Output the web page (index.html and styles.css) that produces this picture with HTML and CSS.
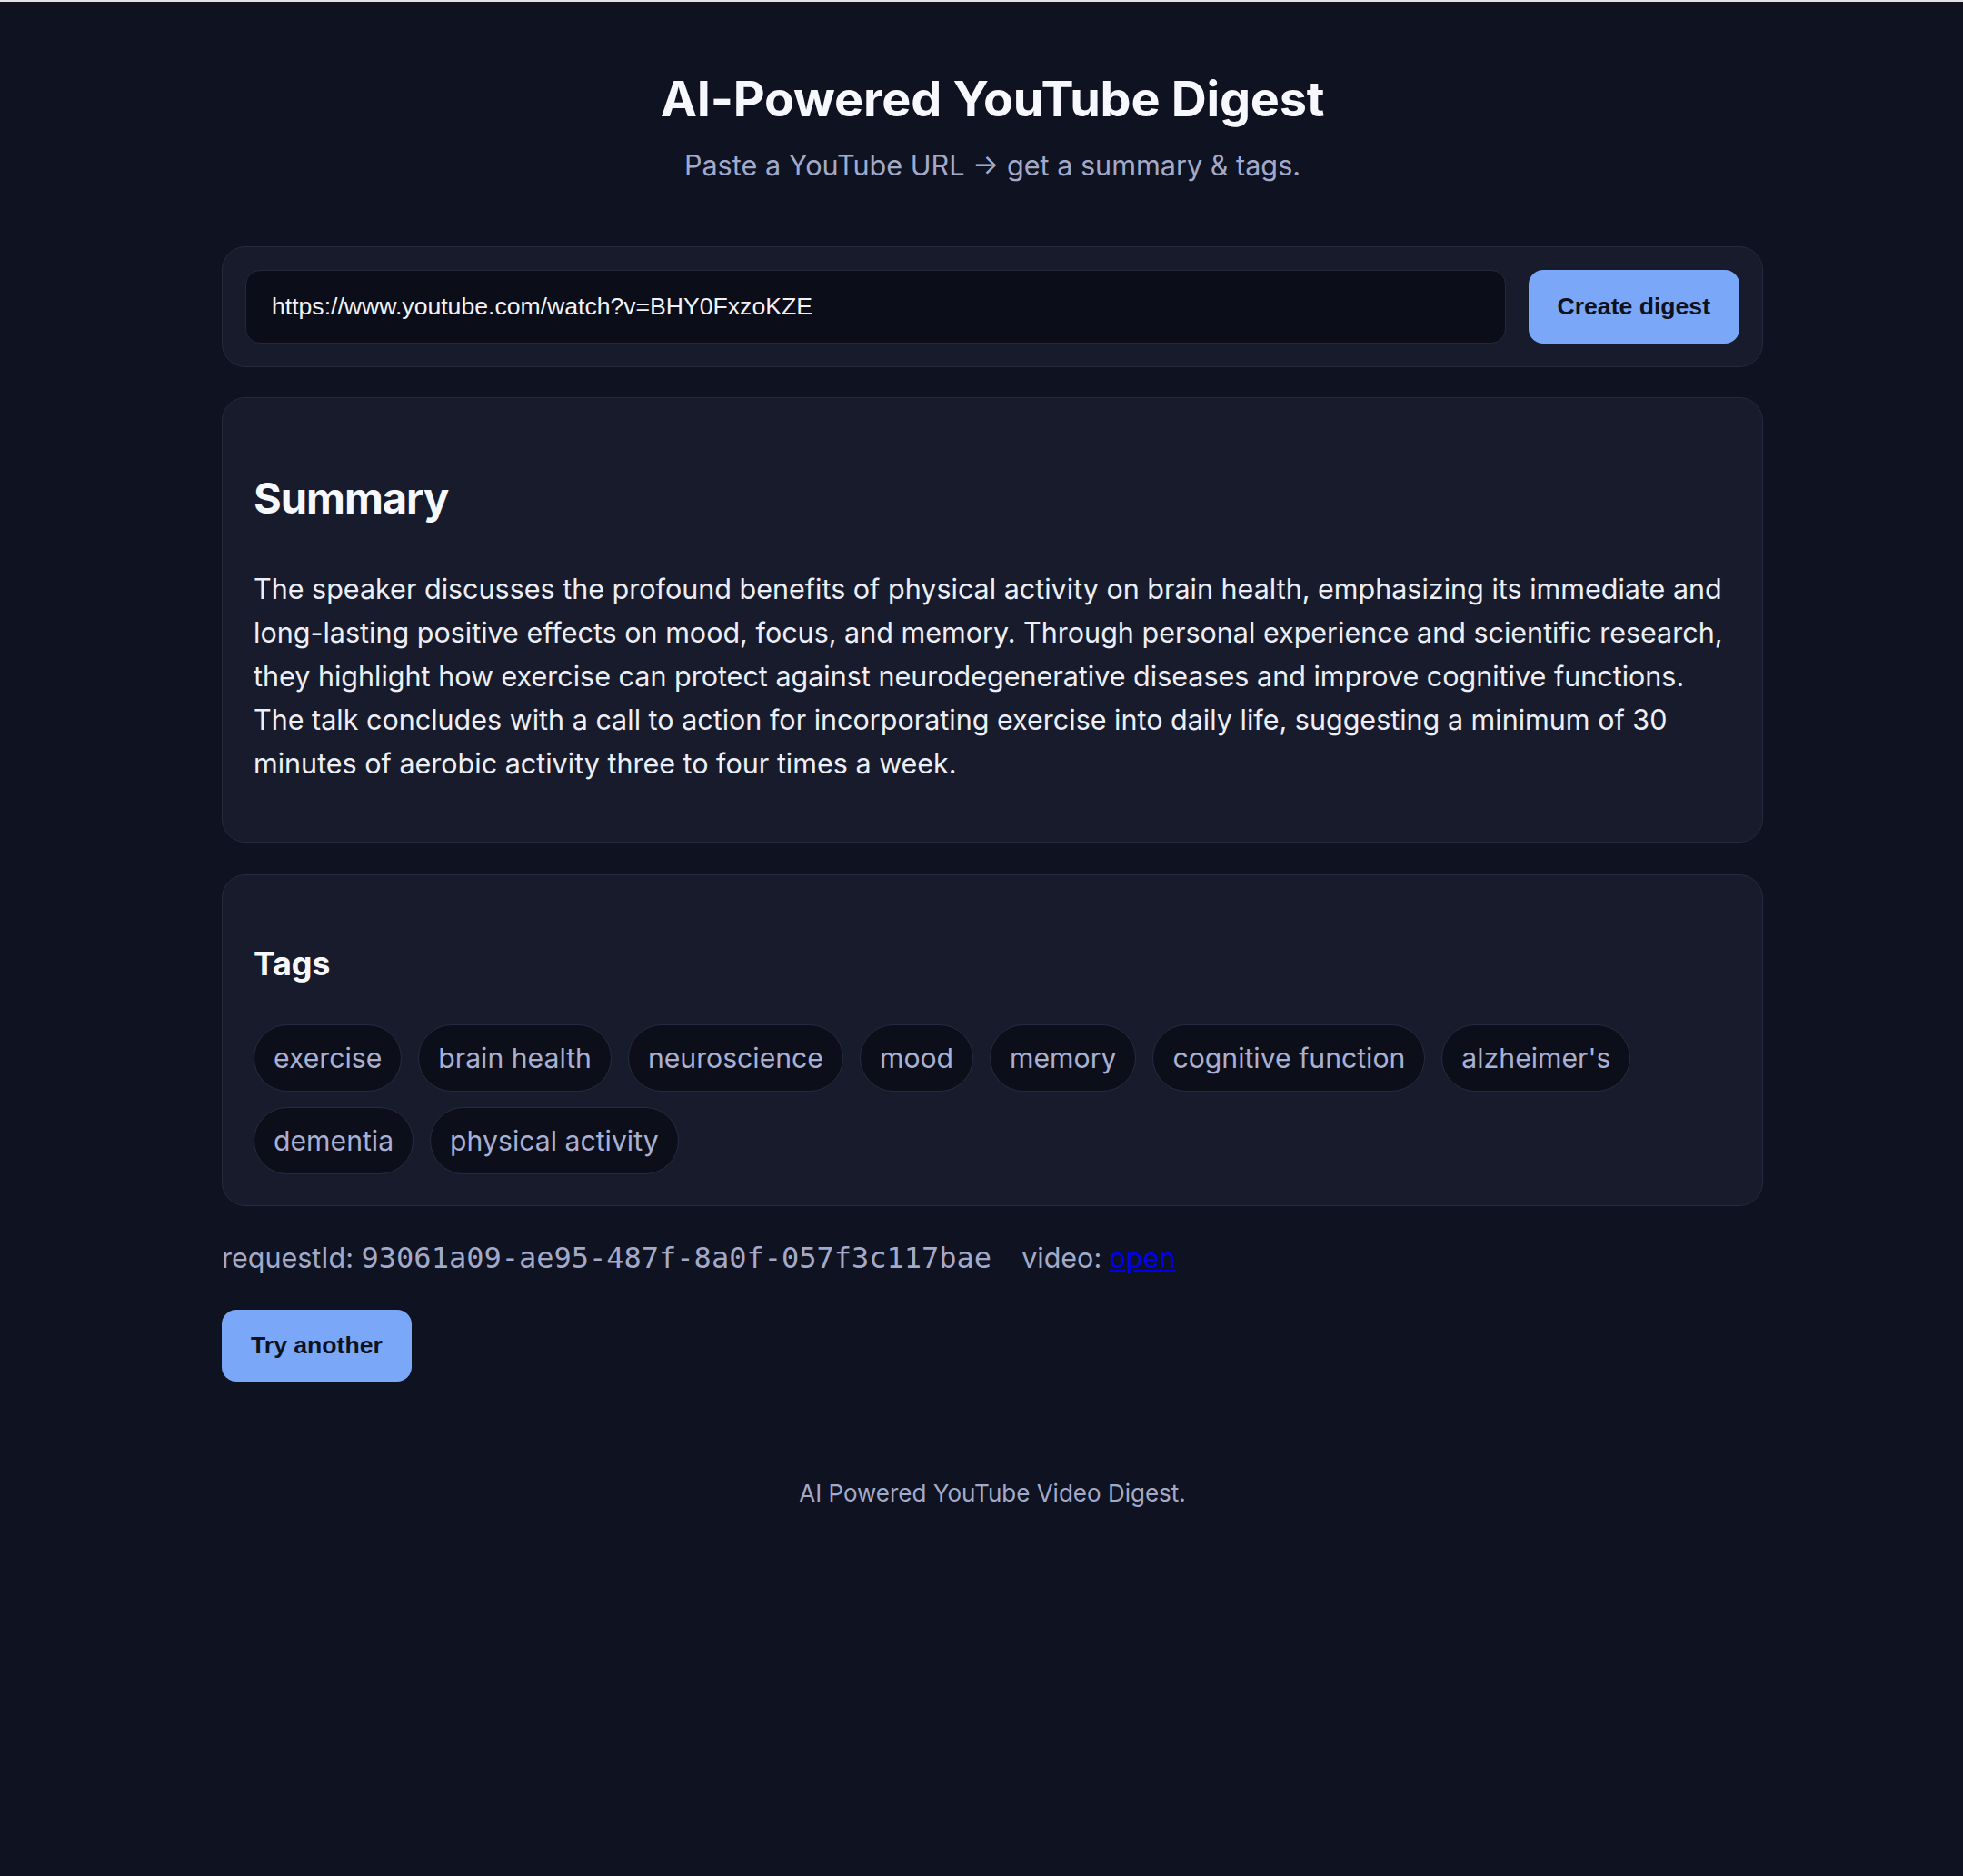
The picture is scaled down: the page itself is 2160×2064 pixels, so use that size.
FILE: index.html
```html
<!DOCTYPE html>
<html lang="en">
<head>
<meta charset="utf-8">
<title>AI-Powered YouTube Digest</title>
<link rel="stylesheet" href="styles.css">
</head>
<body>
<main class="page">
  <header class="hero">
    <h1 class="title">AI-Powered YouTube Digest</h1>
    <p class="subtitle">Paste a YouTube URL → get a summary &amp; tags.</p>
  </header>

  <form class="card url-card">
    <input class="url-input" type="text" value="https://www.youtube.com/watch?v=BHY0FxzoKZE">
    <button class="btn" type="button">Create digest</button>
  </form>

  <section class="card summary-card">
    <h2 class="section-title">Summary</h2>
    <p class="summary">The speaker discusses the profound benefits of physical activity on brain health, emphasizing its immediate and long-lasting positive effects on mood, focus, and memory. Through personal experience and scientific research, they highlight how exercise can protect against neurodegenerative diseases and improve cognitive functions. The talk concludes with a call to action for incorporating exercise into daily life, suggesting a minimum of 30 minutes of aerobic activity three to four times a week.</p>
  </section>

  <section class="card tags-card">
    <h3 class="tags-title">Tags</h3>
    <ul class="tags">
      <li class="tag">exercise</li>
      <li class="tag">brain health</li>
      <li class="tag">neuroscience</li>
      <li class="tag">mood</li>
      <li class="tag">memory</li>
      <li class="tag">cognitive function</li>
      <li class="tag">alzheimer's</li>
      <li class="tag">dementia</li>
      <li class="tag">physical activity</li>
    </ul>
  </section>

  <p class="meta">requestId: <code class="mono">93061a09-ae95-487f-8a0f-057f3c117bae</code><span class="video">video: <a class="link" href="#">open</a></span></p>

  <button class="btn btn-again" type="button">Try another</button>

  <footer class="footer">AI Powered YouTube Video Digest.</footer>
</main>
</body>
</html>
```

FILE: styles.css
```css
html, body {
  background: #0f1220;
}
body {
  margin: 0;
  border-top: 2px solid #e4e4e6;
  padding: 0 0 200px 24px;
  font-family: Inter, "Noto Sans", sans-serif;
  color: #eceef8;
}
.page {
  width: 1696px;
  margin: 0 auto;
  padding-top: 75px;
}
.hero {
  text-align: center;
}
.title {
  margin: 0;
  font-size: 54px;
  line-height: 64px;
  font-weight: 700;
  color: #f6f7ff;
  letter-spacing: -0.25px;
}
.subtitle {
  margin: 21px 0 0;
  font-size: 30.6px;
  line-height: 40px;
  color: #a3aac9;
}
.card {
  background: #181b2b;
  border: 1px solid #262a3d;
  border-radius: 26px;
}
.url-card {
  margin-top: 69px;
  padding: 25px;
  display: flex;
  gap: 25px;
}
.url-input {
  flex: 1;
  box-sizing: border-box;
  height: 81px;
  margin: 0;
  padding: 0 28px;
  background: #0b0d18;
  border: 1px solid #24283a;
  border-radius: 16px;
  color: #f1f2f8;
  font-family: "Liberation Sans", Arial, sans-serif;
  font-size: 26.6px;
  outline: none;
}
.btn {
  margin: 0;
  border: 0;
  border-radius: 16px;
  background: #7aa7f8;
  color: #0e1220;
  font-family: "Liberation Sans", Arial, sans-serif;
  font-weight: 700;
  font-size: 26.6px;
  line-height: 31px;
  padding: 0 32px;
  cursor: pointer;
}
.summary-card {
  margin-top: 33px;
  padding: 34px;
}
.section-title {
  margin: 47px 0 0;
  font-size: 47px;
  line-height: 58px;
  font-weight: 700;
  letter-spacing: -1px;
  color: #f6f7ff;
}
.summary {
  margin: 47px 0 28px;
  font-size: 30.5px;
  line-height: 48px;
  color: #eceef8;
}
.tags-card {
  margin-top: 35px;
  padding: 34px;
}
.tags-title {
  margin: 41px 0 0;
  font-size: 36px;
  line-height: 45px;
  font-weight: 700;
  letter-spacing: -0.3px;
  color: #f6f7ff;
}
.tags {
  list-style: none;
  margin: 44px 0 0;
  padding: 0;
  display: flex;
  flex-wrap: wrap;
  gap: 17px 18px;
}
.tag {
  box-sizing: border-box;
  height: 74px;
  display: flex;
  align-items: center;
  padding: 0 21px;
  background: #0c0e1a;
  border: 1px solid #272b40;
  border-radius: 999px;
  font-size: 30.2px;
  color: #a9b0d2;
}
.meta {
  margin: 33px 0 0;
  font-size: 30.5px;
  line-height: 48px;
  color: #a3aac9;
}
.mono {
  font-family: "DejaVu Sans Mono", monospace;
  font-size: 32px;
  line-height: 1;
}
.video {
  margin-left: 33px;
}
.link {
  color: #0000ee;
}
.btn-again {
  display: block;
  margin-top: 33px;
  padding: 24px 32px;
}
.footer {
  margin-top: 105px;
  text-align: center;
  font-size: 26px;
  line-height: 36px;
  color: #a3aac9;
}
```
